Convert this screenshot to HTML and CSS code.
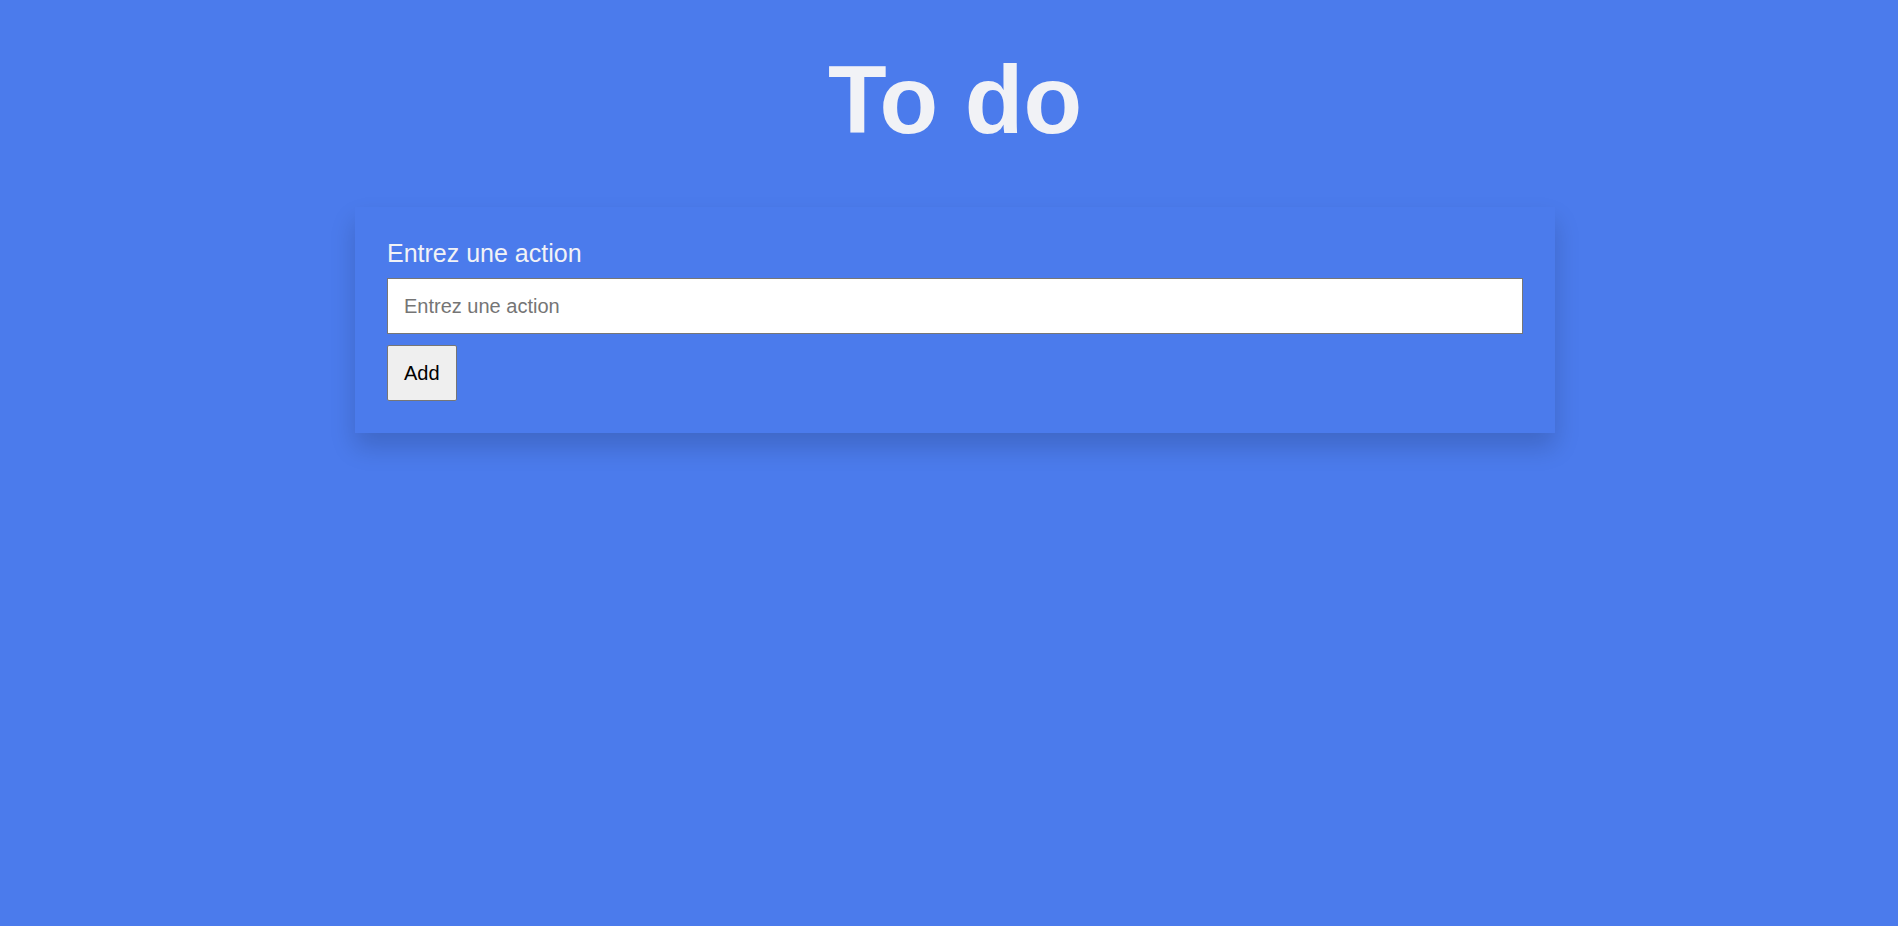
FILE: index.html
```html
<!DOCTYPE html>
<html lang="fr">
<head>
<meta charset="utf-8">
<title>To do</title>
<link rel="stylesheet" href="styles.css">
</head>
<body>
<main class="page">
  <h1 class="title">To do</h1>
  <form class="card">
    <label class="card-label" for="action">Entrez une action</label>
    <input class="card-input" id="action" type="text" placeholder="Entrez une action">
    <button class="card-button" type="button">Add</button>
  </form>
</main>
</body>
</html>
```
FILE: styles.css
```css
html, body {
  margin: 0;
  padding: 0;
}
body {
  background: #4b7bec;
  font-family: "Liberation Sans", Arial, sans-serif;
  min-height: 926px;
}
.page {
  padding-left: 12px;
  display: flex;
  flex-direction: column;
  align-items: center;
}
.title {
  margin: 45px 0 52px;
  font-size: 96px;
  font-weight: 700;
  color: #f1f2f6;
  line-height: normal;
}
.card {
  box-sizing: border-box;
  width: 1200px;
  padding: 32px;
  background: #4b7bec;
  box-shadow: 0 14px 24px rgba(0, 0, 0, 0.16);
  display: flex;
  flex-direction: column;
  align-items: flex-start;
}
.card-label {
  font-size: 25px;
  color: #f1f2f6;
  margin-bottom: 10px;
}
.card-input {
  box-sizing: border-box;
  width: 100%;
  height: 56px;
  margin: 0 0 11px;
  padding: 0 16px;
  border: 1px solid #767676;
  border-radius: 0;
  background: #fff;
  font-family: "Liberation Sans", Arial, sans-serif;
  font-size: 20px;
  color: #000;
}
.card-input::placeholder {
  color: #757575;
}
.card-button {
  box-sizing: border-box;
  height: 56px;
  padding: 0 16px;
  margin: 0;
  border: 1px solid #767676;
  border-radius: 2px;
  background: #efefef;
  font-family: "Liberation Sans", Arial, sans-serif;
  font-size: 20px;
  color: #000;
}
```
